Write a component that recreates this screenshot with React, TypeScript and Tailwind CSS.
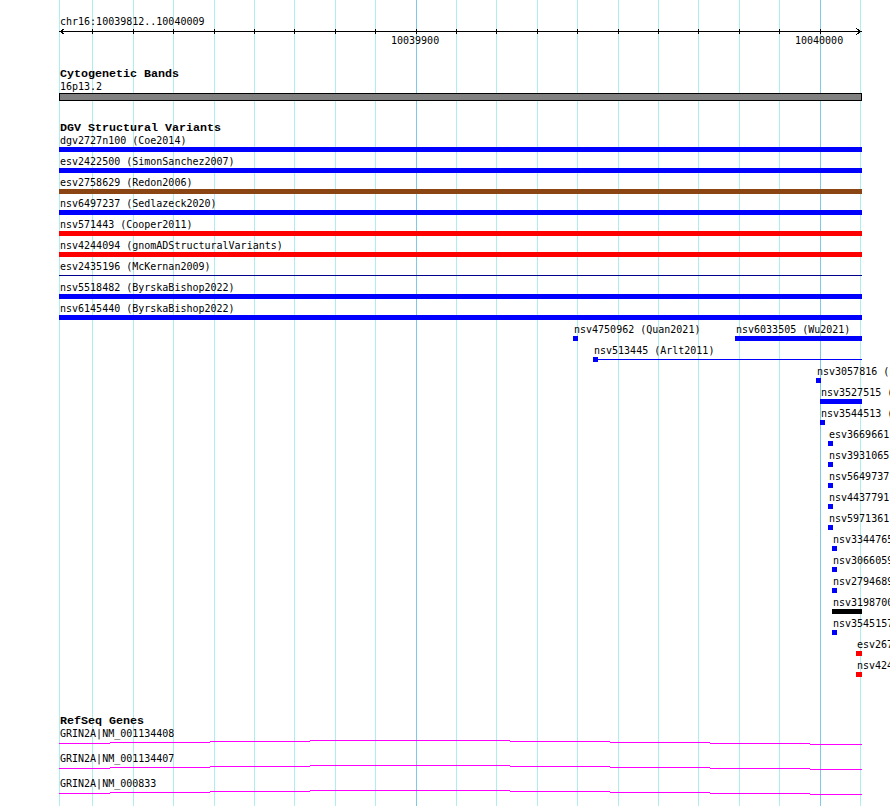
const GRID = [59, 92, 133, 173, 214, 254, 294, 335, 375, 416, 456, 496, 537, 577, 618, 658, 698, 739, 779, 820, 860];
const MAJOR = [416, 820];
const TICKS = GRID.slice(1, 20);

const TRACK_X = 59;
const TRACK_W = 803;

const BLUE = '#0000ff';
const RED = '#ff0000';
const BROWN = '#8b4513';
const NAVY = '#00008b';

type Glyph = 'box' | 'line' | 'pin';
type Feature = { x: number; w: number; color: string; label: string; glyph?: Glyph };

const full = (label: string, color: string, glyph: Glyph = 'box'): Feature => ({
  x: TRACK_X,
  w: TRACK_W,
  color,
  label,
  glyph,
});

// one entry per packed row of the DGV track
const variantRows: Feature[][] = [
  [full('dgv2727n100 (Coe2014)', BLUE)],
  [full('esv2422500 (SimonSanchez2007)', BLUE)],
  [full('esv2758629 (Redon2006)', BROWN)],
  [full('nsv6497237 (Sedlazeck2020)', BLUE)],
  [full('nsv571443 (Cooper2011)', RED)],
  [full('nsv4244094 (gnomADStructuralVariants)', RED)],
  [full('esv2435196 (McKernan2009)', NAVY, 'line')],
  [full('nsv5518482 (ByrskaBishop2022)', BLUE)],
  [full('nsv6145440 (ByrskaBishop2022)', BLUE)],
  [
    { x: 573, w: 5, color: BLUE, label: 'nsv4750962 (Quan2021)' },
    { x: 735, w: 127, color: BLUE, label: 'nsv6033505 (Wu2021)' },
  ],
  [{ x: 593, w: 269, color: BLUE, label: 'nsv513445 (Arlt2011)', glyph: 'pin' }],
  [{ x: 816, w: 5, color: BLUE, label: 'nsv3057816 (F' }],
  [{ x: 820, w: 42, color: BLUE, label: 'nsv3527515 (' }],
  [{ x: 820, w: 5, color: BLUE, label: 'nsv3544513 (' }],
  [{ x: 828, w: 5, color: BLUE, label: 'esv3669661' }],
  [{ x: 828, w: 5, color: BLUE, label: 'nsv3931065' }],
  [{ x: 828, w: 5, color: BLUE, label: 'nsv5649737' }],
  [{ x: 828, w: 5, color: BLUE, label: 'nsv4437791' }],
  [{ x: 828, w: 5, color: BLUE, label: 'nsv5971361' }],
  [{ x: 832, w: 5, color: BLUE, label: 'nsv3344765' }],
  [{ x: 832, w: 5, color: BLUE, label: 'nsv3066059' }],
  [{ x: 832, w: 5, color: BLUE, label: 'nsv2794689' }],
  [{ x: 832, w: 30, color: '#000000', label: 'nsv3198700' }],
  [{ x: 832, w: 5, color: BLUE, label: 'nsv3545157' }],
  [{ x: 856, w: 6, color: RED, label: 'esv267' }],
  [{ x: 856, w: 6, color: RED, label: 'nsv424' }],
];

const genes = ['GRIN2A|NM_001134408', 'GRIN2A|NM_001134407', 'GRIN2A|NM_000833'];

// intron line, drawn as GD steps: [from, to, drop below the peak]
const intronSteps = [
  [0, 51, 3],
  [51, 151, 2],
  [151, 251, 1],
  [251, 451, 0],
  [451, 551, 1],
  [551, 651, 2],
  [651, 751, 3],
  [751, 803, 4],
];

function FeatureGlyph({ f }: { f: Feature }) {
  if (f.glyph === 'line') {
    return (
      <div className="h-[5px] flex items-center" style={{ width: f.w }}>
        <div className="h-px w-full" style={{ background: f.color }} />
      </div>
    );
  }
  if (f.glyph === 'pin') {
    return (
      <div className="h-[5px] flex" style={{ width: f.w }}>
        <div className="w-[5px] h-[5px] shrink-0" style={{ background: f.color }} />
        <div className="flex-1 flex items-center">
          <div className="h-px w-full" style={{ background: f.color }} />
        </div>
      </div>
    );
  }
  return <div className="h-[5px]" style={{ width: f.w, background: f.color }} />;
}

function VariantRow({ feats }: { feats: Feature[] }) {
  return (
    <div className="grid grid-cols-1 h-[21px]">
      {feats.map((f) => (
        <div key={f.label} className="col-start-1 row-start-1 flex flex-col items-start" style={{ marginLeft: f.x }}>
          <span className="pl-px h-[13px] leading-[13px] whitespace-nowrap">{f.label}</span>
          <FeatureGlyph f={f} />
        </div>
      ))}
    </div>
  );
}

function TrackTitle({ children }: { children: string }) {
  return (
    <div className="pl-[60px] h-[12px] leading-[12px] font-['Liberation_Mono',monospace] font-bold text-[11.67px] whitespace-nowrap">
      {children}
    </div>
  );
}

function Ruler() {
  return (
    <svg width={TRACK_W} height={6} className="ml-[59px] block overflow-visible" shapeRendering="crispEdges">
      <rect x={0} y={3} width={TRACK_W} height={1} fill="#000" />
      {TICKS.map((x) => (
        <rect key={x} x={x - TRACK_X} y={1} width={1} height={5} fill="#000" />
      ))}
      <polyline points="5.5,0.5 1.5,3.5 5.5,6.5" fill="none" stroke="#000" strokeWidth={1} />
      <polyline points="797.5,0.5 801.5,3.5 797.5,6.5" fill="none" stroke="#000" strokeWidth={1} />
    </svg>
  );
}

function GeneRow({ name }: { name: string }) {
  return (
    <div className="h-[25px]">
      <div className="pl-[60px] h-[13px] leading-[13px] whitespace-nowrap">{name}</div>
      <svg width={TRACK_W} height={12} className="ml-[59px] block" shapeRendering="crispEdges">
        {intronSteps.map(([a, b, dy]) => (
          <rect key={a} x={a} y={dy} width={b - a} height={1} fill="#ff00ff" />
        ))}
      </svg>
    </div>
  );
}

export default function App() {
  return (
    <div className="relative w-[890px] h-[806px] overflow-hidden bg-white text-black font-['DejaVu_Sans_Mono',monospace] text-[10px]">
      {/* grid */}
      <div className="absolute inset-0">
        {GRID.map((x) => (
          <div
            key={x}
            className={MAJOR.includes(x) ? 'absolute top-0 bottom-0 w-px bg-[#7fc9e6]' : 'absolute top-0 bottom-0 w-px bg-[#afeeee]'}
            style={{ left: x }}
          />
        ))}
      </div>

      <div className="relative pt-[15px]">
        <div className="pl-[60px] h-[13px] leading-[13px]">chr16:10039812..10040009</div>
        <Ruler />
        <div className="grid grid-cols-1 h-[13px] leading-[13px]">
          <span className="col-start-1 row-start-1 ml-[391px]">10039900</span>
          <span className="col-start-1 row-start-1 ml-[795px]">10040000</span>
        </div>

        <div className="mt-[21px]">
          <TrackTitle>Cytogenetic Bands</TrackTitle>
          <div className="pl-[60px] h-[13px] leading-[13px]">16p13.2</div>
          <div className="ml-[59px] w-[803px] h-[8px] border border-black bg-[#808080]" />
        </div>

        <div className="mt-[21px]">
          <TrackTitle>DGV Structural Variants</TrackTitle>
          {variantRows.map((row, i) => (
            <VariantRow key={i} feats={row} />
          ))}
        </div>

        <div className="mt-[35px]">
          <TrackTitle>RefSeq Genes</TrackTitle>
          {genes.map((g) => (
            <GeneRow key={g} name={g} />
          ))}
        </div>
      </div>
    </div>
  );
}
